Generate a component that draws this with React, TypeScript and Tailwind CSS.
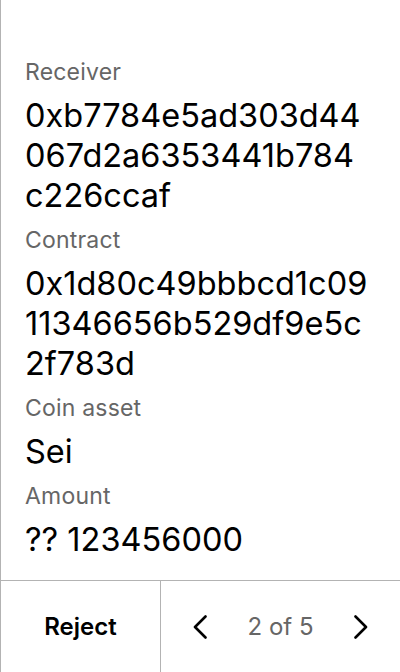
// address values are shown wrapped the same way the wallet screen wraps them
const fields = [
  { label: "Receiver", lines: ["0xb7784e5ad303d44", "067d2a6353441b784", "c226ccaf"] },
  { label: "Contract", lines: ["0x1d80c49bbbcd1c09", "11346656b529df9e5c", "2f783d"] },
  { label: "Coin asset", lines: ["Sei"] },
  { label: "Amount", lines: ["?? 123456000"] },
];

const Chevron = ({ dir }: { dir: "left" | "right" }) => (
  <svg width="14" height="24" viewBox="0 0 14 24" fill="none">
    <polyline
      points={dir === "left" ? "12.5,1.5 2,12 12.5,22.5" : "1.5,1.5 12,12 1.5,22.5"}
      stroke="#000"
      strokeWidth="2.6"
      strokeLinecap="round"
      strokeLinejoin="round"
    />
  </svg>
);

export default function App() {
  return (
    <div
      className="flex h-[672px] w-[400px] flex-col border-l border-[#b3b3b3] bg-white text-black"
      style={{ fontFamily: "Inter, 'Noto Sans', sans-serif" }}
    >
      <div className="flex flex-1 flex-col gap-[10px] pl-[24px] pr-[20px] pt-[58px]">
        {fields.map((f) => (
          <div key={f.label} className="flex flex-col gap-[10px]">
            <div className="text-[23px] leading-[28px] tracking-[0.2px] text-[#666666]">{f.label}</div>
            <div className="text-[32.5px] leading-[40px]">
              {f.lines.map((l) => (
                <div key={l} className="whitespace-nowrap">
                  {l}
                </div>
              ))}
            </div>
          </div>
        ))}
      </div>
      <div className="flex h-[92px] border-t border-[#b3b3b3]">
        <button className="flex w-[160px] items-center justify-center border-r border-[#b3b3b3] text-[24px] font-semibold">
          Reject
        </button>
        <div className="flex flex-1 items-center justify-between px-[32px]">
          <button className="flex items-center">
            <Chevron dir="left" />
          </button>
          <span className="text-[24px] text-[#666666]">2 of 5</span>
          <button className="flex items-center">
            <Chevron dir="right" />
          </button>
        </div>
      </div>
    </div>
  );
}
